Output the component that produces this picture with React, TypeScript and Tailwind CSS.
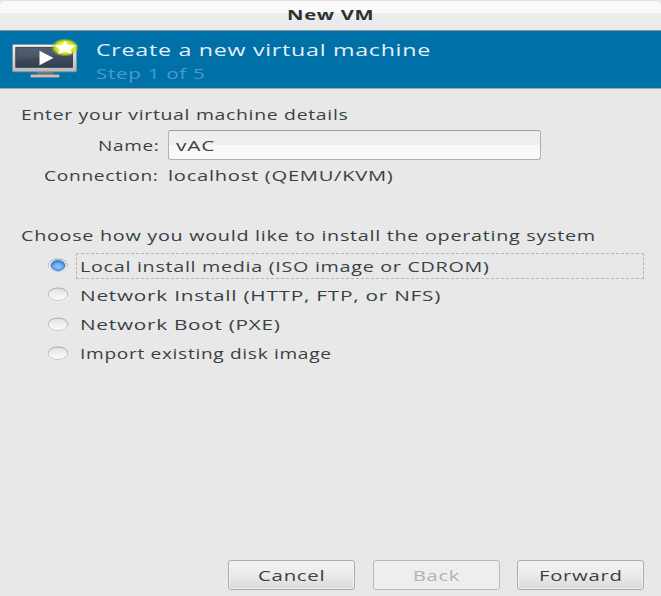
import React, { useLayoutEffect, useRef, useState } from 'react';
import clsx from 'clsx';

interface WideTextProps {
  className: string;
  children: string;
}

// Text stretched horizontally so that it fills the width of its box
const WideText: React.FC<WideTextProps> = ({ className, children }) => {
  const boxRef = useRef<HTMLSpanElement>(null);
  const textRef = useRef<HTMLSpanElement>(null);
  const [scale, setScale] = useState(1);

  useLayoutEffect(() => {
    if (boxRef.current && textRef.current) {
      setScale(boxRef.current.clientWidth / textRef.current.offsetWidth);
    }
  }, [children]);

  return (
    <span ref={boxRef} className={clsx('block shrink-0 text-left whitespace-nowrap', className)}>
      <span ref={textRef} className="inline-block origin-left" style={{ transform: `scaleX(${scale})` }}>
        {children}
      </span>
    </span>
  );
};

const MachineIcon: React.FC = () => (
  <svg className="h-[42px] w-[68px] shrink-0" viewBox="0 0 68 42" fill="none">
    <defs>
      <linearGradient id="screen" x1="0" y1="0" x2="0" y2="1">
        <stop offset="0" stopColor="#47566b" />
        <stop offset="1" stopColor="#343f50" />
      </linearGradient>
      <linearGradient id="frame" x1="0" y1="0" x2="0" y2="1">
        <stop offset="0" stopColor="#f2f2f2" />
        <stop offset="1" stopColor="#b9b9b9" />
      </linearGradient>
      <radialGradient id="glow">
        <stop offset="0.5" stopColor="#eef21c" />
        <stop offset="0.72" stopColor="#d8e40c" stopOpacity="0.9" />
        <stop offset="1" stopColor="#a5c81e" stopOpacity="0" />
      </radialGradient>
    </defs>
    <path d="M25 33H41V37H25Z" fill="#6c7479" />
    <rect x="18.5" y="36.4" width="29" height="3" rx="1.2" fill="#c5c5c2" stroke="#777d7f" strokeWidth="0.7" />
    <rect x="0.5" y="6.5" width="64" height="27.3" rx="1.2" fill="url(#frame)" stroke="#8b9093" strokeWidth="0.8" />
    <rect x="3.8" y="9.3" width="56.7" height="20" fill="url(#screen)" stroke="#28374a" strokeWidth="0.8" />
    <path d="M4 10H60V16L4 22Z" fill="#fff" fillOpacity="0.06" />
    <path d="M27.5 12.8V27.2L41.5 20Z" fill="#fff" />
    <ellipse cx="53" cy="9.5" rx="14" ry="9.3" fill="url(#glow)" />
    <path d="M53 3.2L55.8 7.3L62.5 7.9L57.8 11.2L59.2 15.3L53 13.3L46.7 15.3L48.1 11.2L43.5 7.9L50.2 7.3Z" fill="#fffffa" stroke="#fffffa" strokeLinejoin="round" strokeWidth="1" />
  </svg>
);

const Radio: React.FC<{ checked: boolean }> = ({ checked }) => (
  <svg className="h-[15px] w-[22px] shrink-0" viewBox="0 0 22 15" fill="none">
    <defs>
      <linearGradient id="radio" x1="0" y1="0" x2="0" y2="1">
        <stop offset="0" stopColor="#dde0db" />
        <stop offset="0.5" stopColor="#f0f1ef" />
        <stop offset="1" stopColor="#fafafa" />
      </linearGradient>
      <linearGradient id="radio-edge" x1="0" y1="0" x2="0" y2="1">
        <stop offset="0" stopColor="#a3aa9f" />
        <stop offset="1" stopColor="#c8cac6" />
      </linearGradient>
      <radialGradient id="dot" cy="0.62">
        <stop offset="0" stopColor="#91c8fa" />
        <stop offset="0.65" stopColor="#68aaf4" />
        <stop offset="1" stopColor="#4089e2" />
      </radialGradient>
    </defs>
    <ellipse cx="11" cy="8" rx="10.6" ry="6.8" fill="#f2f2f2" />
    <ellipse cx="11" cy="7.3" rx="9.8" ry="6.3" fill="url(#radio)" stroke="url(#radio-edge)" />
    {checked && <ellipse cx="11" cy="7.5" rx="7" ry="4.9" fill="url(#dot)" stroke="#2f72cb" strokeWidth="0.9" />}
  </svg>
);

const options = [
  { label: 'Local install media (ISO image or CDROM)', width: 'w-[410px]' },
  { label: 'Network Install (HTTP, FTP, or NFS)', width: 'w-[361px]' },
  { label: 'Network Boot (PXE)', width: 'w-[200px]' },
  { label: 'Import existing disk image', width: 'w-[251px]' },
];

const buttons = [
  { label: 'Cancel', width: 'w-[67px]', disabled: false },
  { label: 'Back', width: 'w-[47px]', disabled: true },
  { label: 'Forward', width: 'w-[84px]', disabled: false },
];

const App: React.FC = () => (
  <div className="flex h-[596px] w-[661px] flex-col overflow-hidden bg-[#e8e8e8] font-['Open_Sans','Noto_Sans',sans-serif] text-[14px] leading-[20px] tracking-[0.5px] text-[#3a4143]">
    <header className="flex h-[31px] shrink-0 justify-center rounded-t-[5px] border-t border-b border-t-[#e2e2e2] border-b-[#89949a] bg-linear-to-b from-[#fafafa] from-40% via-[#eeeeee] via-40% to-[#e8e8e8] pt-[4px] font-bold text-[#2c3234]">
      <WideText className="w-[88px]">New VM</WideText>
    </header>

    <div className="flex h-[58px] shrink-0 border-b border-[#a8a8a0] bg-[#0070a8] pt-[7px] pl-[12px]">
      <MachineIcon />
      <div className="ml-[16px]">
        <WideText className="w-[335px] text-[16px] leading-[24px] text-[#e4f1f8]">Create a new virtual machine</WideText>
        <WideText className="mt-px w-[110px] leading-[22px] text-[#4a9bcb]">Step 1 of 5</WideText>
      </div>
    </div>

    <main className="flex flex-col pt-[16px] pl-[20px]">
      <WideText className="ml-px w-[327px]">Enter your virtual machine details</WideText>
      <div className="mt-[5px] flex h-[30px] items-center pl-[78px]">
        <WideText className="mt-px w-[61px]">Name:</WideText>
        <div className="ml-[9px] flex h-[30px] w-[373px] items-center rounded-[3px] border border-[#aeb4ac] border-t-[#989e96] bg-linear-to-b from-[#efefef] from-50% to-[#f9f9f9] to-50% pl-[7px]">
          <WideText className="mt-px w-[39px]">vAC</WideText>
        </div>
      </div>
      <div className="mt-[6px] flex pl-[24px]">
        <WideText className="w-[115px]">Connection:</WideText>
        <WideText className="ml-[9px] w-[226px]">localhost (QEMU/KVM)</WideText>
      </div>

      <WideText className="mt-[40px] ml-px w-[575px]">Choose how you would like to install the operating system</WideText>
      <div className="mt-[6px] flex flex-col gap-[2.3px] pl-[27px]">
        {options.map(({ label, width }, index) => (
          <div key={label} className="flex h-[27px] items-center">
            <Radio checked={index === 0} />
            <div
              className={clsx(
                'ml-[7px] flex h-[26px] w-[568px] items-center rounded-[1px] border pl-[3px]',
                index === 0 ? 'border-dashed border-[#b5b5b5]' : 'border-transparent'
              )}
            >
              <WideText className={clsx('mt-[2px]', width)}>{label}</WideText>
            </div>
          </div>
        ))}
      </div>
    </main>

    <footer className="mt-auto flex shrink-0 justify-end gap-[17.5px] pr-[17px] pb-[6px]">
      {buttons.map(({ label, width, disabled }) => (
        <button
          key={label}
          disabled={disabled}
          className={clsx(
            'flex h-[30px] w-[127px] items-center justify-center rounded-[3px] border',
            disabled
              ? 'border-[#b7bab5] bg-[#eeeeee] text-[#b0b3ae]'
              : 'border-[#aaafa8] bg-linear-to-b from-[#f5f5f5] via-[#e8e8e8] via-60% to-[#d9d9d9] shadow-[inset_0_0_0_1px_#f0f0f0]'
          )}
        >
          <WideText className={clsx('mt-px', width)}>{label}</WideText>
        </button>
      ))}
    </footer>
  </div>
);

export default App;
